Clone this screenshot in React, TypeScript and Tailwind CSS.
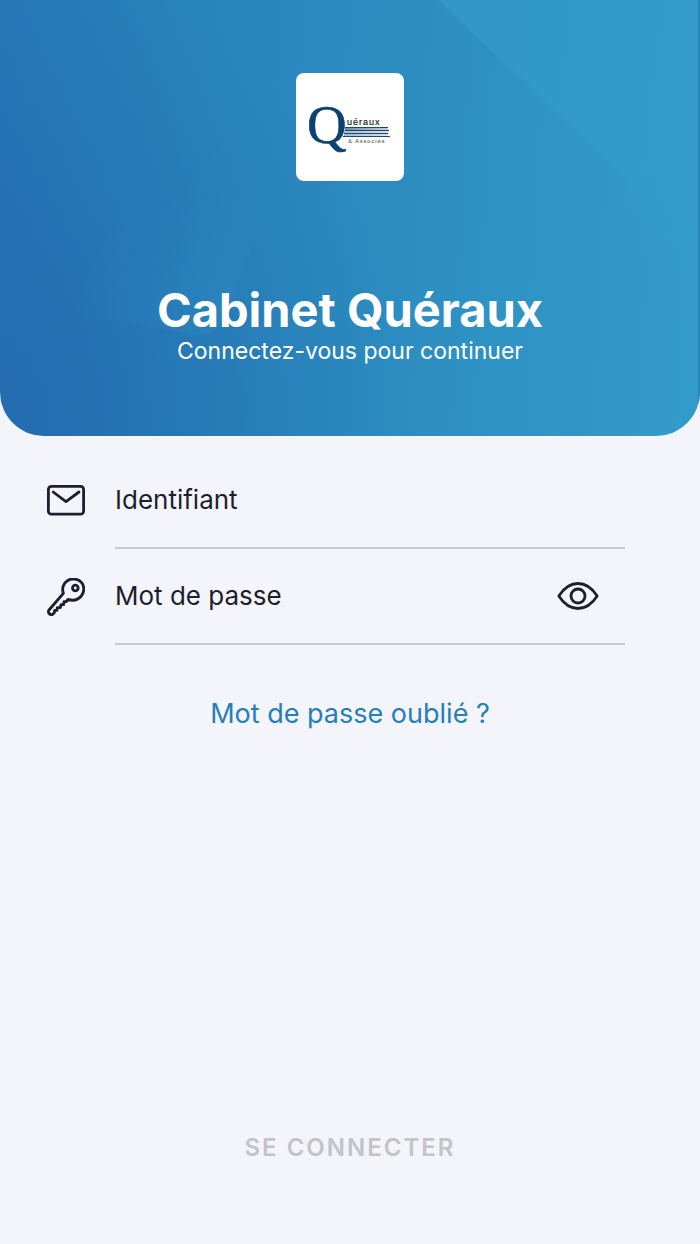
import React from 'react';

function Logo() {
  return (
    <div className="w-27 h-27 bg-white rounded-lg flex items-center justify-center">
      <svg width="84" height="68" viewBox="0 -8 84 68" role="img" aria-label="Quéraux & Associés">
        <defs>
          <linearGradient id="stripes" x1="0" y1="0" x2="1" y2="0">
            <stop offset="0" stopColor="#6f8ca6" />
            <stop offset="1" stopColor="#c6cdd3" />
          </linearGradient>
        </defs>
        <rect x="37" y="26" width="43" height="4" fill="url(#stripes)" />
        <rect x="36" y="30" width="44" height="5" fill="url(#stripes)" opacity="0.6" />
        <g fill="#154a78">
          <rect x="37" y="26" width="43" height="1" />
          <rect x="37" y="29" width="44" height="1" />
          <rect x="36" y="32" width="44" height="1" />
          <rect x="35" y="35" width="47" height="1" />
        </g>
        <text x="-1" y="42" fontSize="55" fill="#0d4270" stroke="#0d4270" strokeWidth="0.6" fontFamily="Liberation Serif, serif">Q</text>
        <text x="39" y="24" fontSize="9" letterSpacing="1" fill="#222222" stroke="#222222" strokeWidth="0.2" fontFamily="Liberation Sans, sans-serif">uéraux</text>
        <text x="40" y="42" fontSize="6" letterSpacing="0.8" fill="#444444" fontFamily="Liberation Sans, sans-serif">&amp; Associés</text>
      </svg>
    </div>
  );
}

function HeaderShapes() {
  return (
    <svg className="absolute inset-0 w-full h-full" viewBox="0 0 700 436" preserveAspectRatio="none" aria-hidden="true">
      <defs>
        <linearGradient id="facet" x1="438" y1="0" x2="700" y2="0" gradientUnits="userSpaceOnUse">
          <stop offset="0" stopColor="#36a3d0" stopOpacity="0.5" />
          <stop offset="1" stopColor="#36a3d0" stopOpacity="0.1" />
        </linearGradient>
        <linearGradient id="facetFade" x1="0" y1="176" x2="0" y2="270" gradientUnits="userSpaceOnUse">
          <stop offset="0" stopColor="#36a3d0" stopOpacity="0.16" />
          <stop offset="1" stopColor="#36a3d0" stopOpacity="0" />
        </linearGradient>
        <radialGradient id="glow" cx="215" cy="320" r="140" gradientUnits="userSpaceOnUse">
          <stop offset="0" stopColor="#36a7d2" stopOpacity="0.16" />
          <stop offset="0.5" stopColor="#36a7d2" stopOpacity="0.07" />
          <stop offset="1" stopColor="#36a7d2" stopOpacity="0" />
        </radialGradient>
      </defs>
      <path d="M438 0L625 176H700V0Z" fill="url(#facet)" />
      <path d="M625 176H700V270H625Z" fill="url(#facetFade)" />
      <path d="M70 313L195 335Q213 336 221 322L275 190L70 180Z" fill="url(#glow)" />
    </svg>
  );
}

function MailIcon() {
  return (
    <svg width="38" height="32" viewBox="0 0 38 32" fill="none" stroke="currentColor" strokeWidth="2.8" strokeLinecap="round" strokeLinejoin="round">
      <rect x="1.4" y="1.4" width="35.2" height="27.8" rx="3" />
      <path d="M6.2 7L19 16.6L32 7" />
    </svg>
  );
}

function KeyIcon() {
  return (
    <svg width="38" height="38" viewBox="21 21 114 114" fill="none" stroke="currentColor" strokeWidth="8.5" strokeLinecap="round" strokeLinejoin="round">
      <path d="M70 67C65 53 70 36 82 29C96 21 115 23 125 35C134 46 133 64 124 75C113 88 98 90 84 85L79 92L72 92L71 101L63 101L61 110L52 110L51 118L44 118L43 125L39 129C36 132 32 132 29 129C25 126 24 120 27 117Z" />
      <circle cx="106" cy="51" r="8.5" />
    </svg>
  );
}

function EyeIcon() {
  return (
    <svg width="42" height="28" viewBox="0 0 42 28" fill="none" stroke="currentColor" strokeWidth="2.8" strokeLinejoin="round">
      <path d="M1.8 14C6 7.5 13 1.5 21 1.5S36 7.5 40.2 14C36 20.5 29 26.5 21 26.5S6 20.5 1.8 14Z" />
      <circle cx="21" cy="14" r="7" />
    </svg>
  );
}

const inputClass = 'flex-1 min-w-0 h-full pb-[2px] bg-transparent text-[26px] text-[#1e1f2e] placeholder:text-[#1e1f2e] placeholder:opacity-100 outline-none';

export default function App() {
  const [login, setLogin] = React.useState('');
  const [password, setPassword] = React.useState('');
  const [visible, setVisible] = React.useState(false);

  return (
    <div className="min-h-screen flex flex-col bg-[#f4f5fa] text-[#1e1f2e] font-['Inter',sans-serif]">
      <header className="relative overflow-hidden rounded-b-[44px] bg-[radial-gradient(ellipse_60%_110%_at_0%_100%,rgba(32,100,170,0.65),rgba(32,100,170,0)),linear-gradient(93deg,#2677b6_0%,#2a86bd_33%,#2c8cc0_55%,#2f94c5_75%,#339bca_100%)]">
        <HeaderShapes />
        <span className="absolute inset-y-0 right-0 w-[2px] bg-[#2a84be]" />
        <div className="relative flex flex-col items-center pt-[73px] pb-[72px] text-white">
          <Logo />
          <h1 className="mt-[101px] text-[47px] leading-[56px] font-bold">Cabinet Quéraux</h1>
          <p className="text-[23px] leading-[26px]">Connectez-vous pour continuer</p>
        </div>
      </header>

      <form className="flex-1 flex flex-col" onSubmit={(e) => e.preventDefault()}>
        <div className="pt-[17px] pl-[47px] pr-[75px]">
          <div className="flex items-center gap-[30px] h-24">
            <label htmlFor="login" className="w-[38px]"><MailIcon /></label>
            <div className="flex-1 flex items-center h-full border-b-2 border-[#c8c8ce]">
              <input
                id="login"
                type="text"
                aria-label="Identifiant"
                placeholder="Identifiant"
                value={login}
                onChange={(e) => setLogin(e.target.value)}
                className={inputClass}
              />
            </div>
          </div>
          <div className="flex items-center gap-[30px] h-24">
            <label htmlFor="password" className="w-[38px]"><KeyIcon /></label>
            <div className="flex-1 flex items-center h-full pr-[26px] border-b-2 border-[#c8c8ce]">
              <input
                id="password"
                type={visible ? 'text' : 'password'}
                aria-label="Mot de passe"
                placeholder="Mot de passe"
                value={password}
                onChange={(e) => setPassword(e.target.value)}
                className={inputClass}
              />
              <button type="button" aria-label="Afficher le mot de passe" onClick={() => setVisible(!visible)}>
                <EyeIcon />
              </button>
            </div>
          </div>
        </div>

        <a href="#" className="self-center mt-[51px] text-[27px] leading-[36px] text-[#267fb9]">Mot de passe oublié ?</a>

        <button type="submit" disabled={!login || !password} className="self-center mt-auto mb-20 text-[24px] leading-[32px] font-semibold tracking-[2px] text-[#c3c4c9]">
          SE CONNECTER
        </button>
      </form>
    </div>
  );
}
